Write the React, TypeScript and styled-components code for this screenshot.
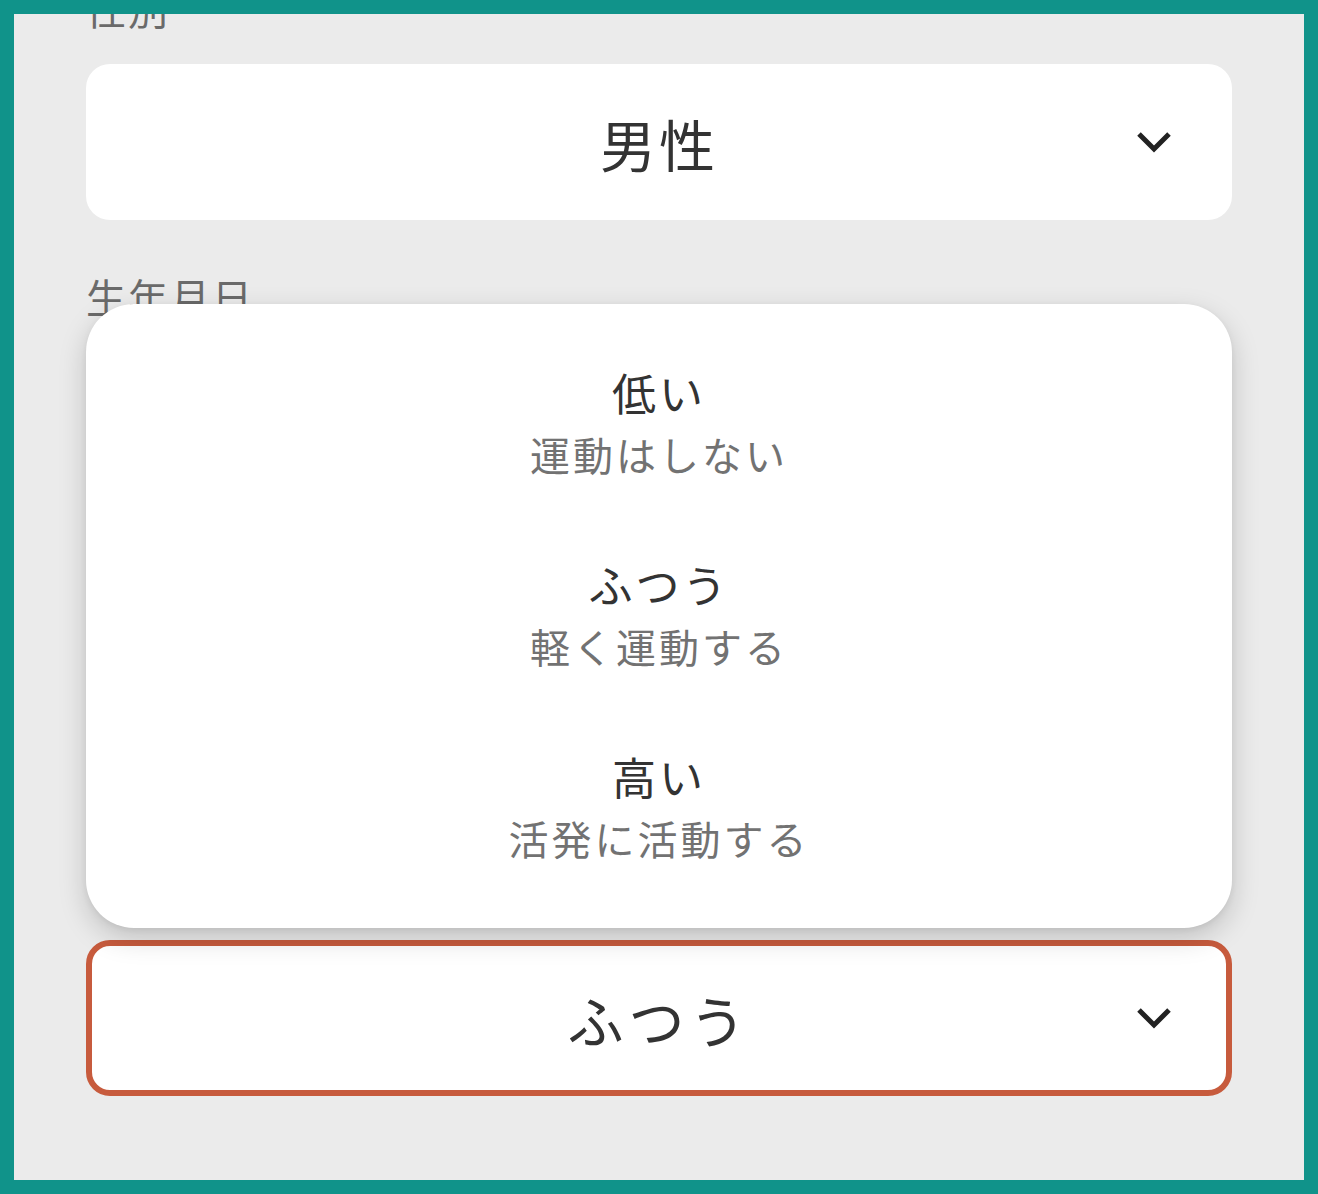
import { useState } from 'react';
import styled, { createGlobalStyle } from 'styled-components';

interface Level {
  id: string;
  label: string;
  note: string;
}

const LEVELS: Level[] = [
  { id: 'low', label: '低い', note: '運動はしない' },
  { id: 'normal', label: 'ふつう', note: '軽く運動する' },
  { id: 'high', label: '高い', note: '活発に活動する' },
];

const Chevron = () => (
  <svg width="36" height="22" viewBox="0 0 36 22" aria-hidden="true">
    <path
      d="M3 3 L18 18 L33 3"
      fill="none"
      stroke="#222"
      strokeWidth="5"
      strokeLinecap="butt"
      strokeLinejoin="miter"
    />
  </svg>
);

const App = () => {
  const [level, setLevel] = useState('normal');
  const [open, setOpen] = useState(true);
  const current = LEVELS.find((l) => l.id === level);

  return (
    <>
      <GlobalStyle />
      <Frame>
        <Form>
          <Field>
            <Label>性別</Label>
            <SelectBox>
              <SelectValue>男性</SelectValue>
              <Chevron />
            </SelectBox>
          </Field>

          <Field>
            <Label>生年月日</Label>
            <SelectBox>
              <SelectValue>1990年1月1日</SelectValue>
              <Chevron />
            </SelectBox>
          </Field>

          <Field>
            <Label>身長</Label>
            <SelectBox>
              <SelectValue>170 cm</SelectValue>
              <Chevron />
            </SelectBox>
          </Field>

          <Field $spaced>
            <Label $hidden={open}>活動レベル</Label>
            <Anchor>
              {open && (
                <Menu>
                  {LEVELS.map((l) => (
                    <Option
                      key={l.id}
                      onClick={() => {
                        setLevel(l.id);
                        setOpen(false);
                      }}
                    >
                      <OptionLabel>{l.label}</OptionLabel>
                      <OptionNote>{l.note}</OptionNote>
                    </Option>
                  ))}
                </Menu>
              )}
              <SelectBox $active={open} onClick={() => setOpen(!open)}>
                <SelectValue $wide>{current?.label}</SelectValue>
                <Chevron />
              </SelectBox>
            </Anchor>
          </Field>
        </Form>
      </Frame>
    </>
  );
};

export default App;

const GlobalStyle = createGlobalStyle`
  html, body {
    margin: 0;
    padding: 0;
    background: #10938a;
  }
  body {
    font-family: "Noto Sans CJK JP", "Noto Sans", sans-serif;
  }
`;

const Frame = styled.div`
  margin: 14px;
  height: 1166px;
  background: #ebebeb;
  overflow: hidden;
`;

const Form = styled.div`
  display: flex;
  flex-direction: column;
  gap: 48px;
  margin-top: -34px;
  padding: 0 72px;
`;

const Field = styled.div<{ $spaced?: boolean }>`
  display: flex;
  flex-direction: column;
  gap: 28px;
  margin-top: ${({ $spaced }) => ($spaced ? '12px' : '0')};
`;

const Label = styled.div<{ $hidden?: boolean }>`
  font-size: 40px;
  line-height: 56px;
  letter-spacing: 2px;
  color: #6a6a6a;
  visibility: ${({ $hidden }) => ($hidden ? 'hidden' : 'visible')};
`;

const Anchor = styled.div`
  position: relative;
`;

const SelectBox = styled.div<{ $active?: boolean }>`
  position: relative;
  box-sizing: border-box;
  height: 156px;
  display: flex;
  align-items: center;
  justify-content: center;
  background: #fff;
  border-radius: 24px;
  border: 6px solid ${({ $active }) => ($active ? '#c75b3d' : 'transparent')};
  cursor: pointer;

  svg {
    position: absolute;
    right: 54px;
    top: 50%;
    transform: translateY(-50%);
  }
`;

const SelectValue = styled.span<{ $wide?: boolean }>`
  font-size: 56px;
  letter-spacing: ${({ $wide }) => ($wide ? '5px' : '3px')};
  color: #333;
`;

const Menu = styled.div`
  position: absolute;
  left: 0;
  right: 0;
  bottom: calc(100% + 12px);
  z-index: 2;
  display: flex;
  flex-direction: column;
  padding: 24px 0;
  background: #fff;
  border-radius: 48px;
  box-shadow: 0 10px 28px rgba(0, 0, 0, 0.18), 0 2px 6px rgba(0, 0, 0, 0.06);
`;

const Option = styled.div`
  height: 192px;
  display: flex;
  flex-direction: column;
  align-items: center;
  justify-content: center;
  gap: 8px;
  cursor: pointer;
`;

const OptionLabel = styled.div`
  font-size: 44px;
  line-height: 52px;
  letter-spacing: 3px;
  color: #333;
`;

const OptionNote = styled.div`
  font-size: 40px;
  line-height: 56px;
  letter-spacing: 3px;
  color: #727272;
`;
